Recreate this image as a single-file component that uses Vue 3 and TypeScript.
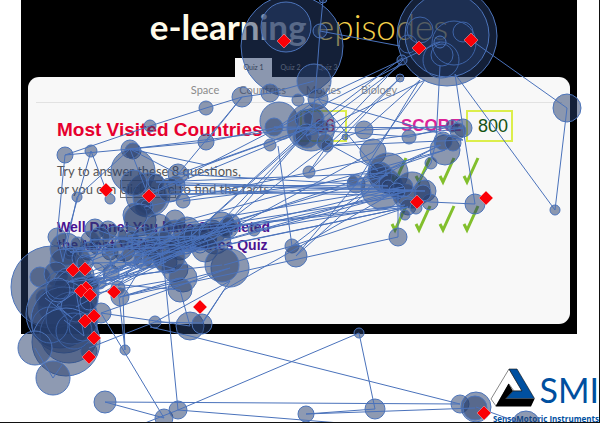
<script setup lang="ts">
type Dot = [number, number, number]
type Point = [number, number]

const tabs: string[] = ['Quiz 1', 'Quiz 2', 'Quiz 3']
const topics: string[] = ['Space', 'Countries', 'Movies', 'Biology']

// Fixations: centre x, centre y, radius (longer dwell = larger circle)
const fixations: Dot[] = [
  // title area
  [292, 46, 51], [286, 27, 25], [323, -1, 4], [320, 31, 7],
  [447, 36, 50], [447, 35, 42], [440, 42, 6],
  // menu and timer
  [314, 81, 17], [270, 93, 9], [242, 97, 10], [206, 108, 7], [279, 121, 19], [298, 100, 6],
  [318, 99, 10], [274, 127, 9], [311, 127, 24], [314, 118, 10], [302, 137, 9], [322, 127, 7],
  [304, 119, 9], [345, 137, 3], [364, 130, 9], [307, 136, 12], [325, 142, 8], [327, 146, 6],
  [270, 145, 6], [206, 142, 8], [150, 126, 6], [309, 172, 6],
  // score
  [400, 78, 4], [402, 60, 5], [567, 108, 14], [409, 137, 7], [452, 126, 6], [463, 128, 9],
  [458, 131, 8], [445, 150, 15], [443, 141, 9], [453, 143, 8], [431, 163, 6], [555, 210, 5],
  [475, 204, 10],
  // tick marks
  [373, 152, 13], [356, 184, 9], [353, 181, 5], [388, 173, 20], [382, 188, 21], [380, 174, 12],
  [378, 171, 8], [390, 184, 11], [388, 186, 6], [412, 190, 18], [425, 191, 11], [430, 202, 8],
  [405, 196, 12], [403, 187, 10], [408, 207, 8], [416, 208, 6], [405, 215, 5], [398, 237, 9],
  [397, 191, 8], [423, 193, 8],
  // intro text
  [65, 155, 8], [91, 151, 6], [130, 149, 9], [133, 151, 8], [133, 171, 22], [148, 195, 22],
  [150, 197, 17], [134, 183, 13], [144, 207, 9], [146, 205, 5], [77, 197, 5], [110, 199, 5],
  [183, 201, 7], [178, 174, 10], [176, 185, 9], [156, 182, 8], [135, 215, 12], [170, 190, 12],
  [140, 220, 16], [175, 220, 10],
  // middle band
  [57, 237, 9], [95, 229, 10], [108, 230, 9], [115, 238, 12], [128, 236, 10], [132, 237, 6],
  [145, 240, 13], [158, 228, 14], [162, 247, 15], [166, 262, 11], [175, 236, 16], [180, 248, 12],
  [187, 231, 14], [190, 240, 12], [196, 236, 12], [204, 236, 13], [212, 233, 13], [222, 224, 12],
  [228, 228, 10], [226, 230, 7], [231, 223, 9], [215, 238, 16], [205, 249, 13], [254, 230, 6],
  [292, 246, 7], [296, 256, 11], [230, 268, 19], [222, 265, 17], [110, 252, 8], [110, 251, 5],
  [124, 250, 11], [132, 256, 10], [143, 260, 9], [151, 247, 10], [90, 240, 9], [97, 246, 8],
  [175, 269, 13], [183, 278, 14], [111, 273, 8], [180, 290, 12], [190, 326, 14], [202, 324, 10],
  [155, 322, 6], [120, 297, 9], [118, 288, 7], [101, 313, 10], [169, 257, 16], [139, 245, 7],
  [88, 251, 9], [102, 262, 9], [100, 237, 10], [118, 262, 8], [152, 259, 9],
  // left cluster
  [52, 287, 41], [40, 277, 10], [66, 249, 16], [78, 244, 7], [70, 253, 7], [70, 252, 4],
  [63, 262, 13], [81, 258, 9], [56, 274, 12], [68, 282, 14], [83, 275, 11], [76, 292, 23],
  [80, 296, 18], [45, 298, 9], [56, 307, 4], [57, 305, 19], [60, 314, 34], [64, 320, 33],
  [69, 334, 29], [72, 318, 26], [76, 307, 15], [89, 301, 9], [100, 283, 6], [92, 283, 7],
  [85, 263, 8], [58, 290, 12], [89, 351, 8], [66, 342, 34], [35, 348, 17], [53, 378, 17],
  // lower edge
  [125, 350, 5], [105, 402, 11], [164, 418, 9], [178, 410, 9], [359, 333, 5], [306, 414, 8],
  [375, 409, 10], [460, 404, 9], [476, 407, 15], [475, 408, 12], [526, 425, 14]
]

// Faint outlines buried under other fixations
const outlines: Dot[] = [
  [442, 55, 11], [454, 43, 22], [441, 60, 18], [463, 32, 10], [408, 44, 9], [420, 30, 13],
  [60, 285, 14], [90, 250, 8], [74, 331, 18], [50, 325, 18], [83, 327, 14], [96, 272, 9],
  [200, 245, 8], [160, 236, 9], [186, 246, 8], [122, 243, 7], [310, 122, 13], [316, 133, 10]
]

const saccades: Point[][] = [
  [[323, 0], [320, 31], [315, 98], [311, 127]],
  [[320, 31], [400, 46]],
  [[567, 108], [555, 210], [455, 74]],
  [[471, 40], [567, 108]],
  [[65, 155], [150, 126], [206, 108], [242, 97], [270, 93], [314, 81]],
  [[65, 155], [57, 237], [63, 262], [77, 197], [130, 149], [148, 195]],
  [[106, 190], [91, 151], [63, 250]],
  [[65, 155], [206, 142], [278, 127], [318, 99], [440, 42]],
  [[206, 142], [242, 97], [178, 174], [311, 127], [402, 58]],
  [[148, 195], [402, 64], [306, 136], [425, 80], [373, 152], [215, 238]],
  [[318, 99], [378, 171], [325, 142], [403, 60]],
  [[318, 99], [463, 140], [327, 146], [400, 78], [309, 172], [327, 146], [463, 128]],
  [[440, 66], [436, 141], [431, 163], [412, 190]],
  [[455, 74], [463, 128], [475, 204], [430, 202], [405, 196]],
  [[364, 130], [452, 126], [409, 137], [274, 127], [463, 128]],
  [[345, 137], [364, 130], [420, 80], [356, 184], [441, 145]],
  [[130, 149], [311, 127], [206, 165], [130, 149], [178, 174]],
  [[148, 195], [270, 145], [311, 127], [215, 238]],
  [[144, 207], [440, 145], [388, 173], [156, 182], [412, 190]],
  [[178, 174], [388, 186], [176, 185], [425, 191], [148, 195], [382, 188]],
  [[183, 201], [388, 175], [223, 224], [405, 196], [170, 190]],
  [[278, 146], [292, 246], [388, 173], [296, 256], [356, 184]],
  [[310, 127], [189, 238], [302, 137], [204, 240], [327, 146]],
  [[231, 223], [445, 150], [158, 228], [403, 187], [212, 233]],
  [[254, 230], [405, 205], [187, 231], [408, 207], [205, 249]],
  [[224, 265], [292, 246], [408, 207], [169, 257]],
  [[398, 237], [230, 274], [120, 297]],
  [[398, 190], [398, 237]],
  [[202, 324], [224, 290], [398, 190], [190, 250], [412, 190], [162, 247]],
  [[80, 258], [187, 231], [76, 292], [215, 238], [68, 282], [222, 265]],
  [[83, 275], [175, 236], [90, 240], [196, 236], [66, 249], [180, 248]],
  [[110, 251], [204, 236], [115, 238], [205, 249], [132, 256], [226, 230]],
  [[76, 292], [145, 240], [85, 263], [166, 262], [101, 283], [212, 233]],
  [[80, 296], [183, 278], [120, 297], [230, 268], [101, 313]],
  [[100, 283], [180, 290], [190, 326], [101, 313]],
  [[89, 301], [124, 250], [70, 252], [162, 247], [111, 273], [169, 257]],
  [[88, 280], [143, 260], [175, 269], [92, 283], [231, 223], [76, 307]],
  [[95, 229], [139, 245], [158, 228], [128, 236], [222, 224]],
  [[104, 268], [150, 244], [118, 286], [196, 246], [96, 290], [170, 250]],
  [[155, 322], [202, 323], [230, 281], [155, 322], [89, 348]],
  [[125, 350], [118, 288]],
  [[125, 350], [123, 297], [158, 240]],
  [[101, 313], [164, 418], [105, 402], [460, 404], [190, 336], [150, 327]],
  [[162, 247], [178, 410], [359, 333], [375, 409], [306, 414], [475, 408]],
  [[178, 410], [340, 423]],
  [[145, 423], [178, 410]],
  [[35, 348], [53, 378], [62, 365]],
  [[64, 320], [84, 336], [76, 292], [57, 305], [72, 318], [45, 298]],
  [[476, 407], [526, 425]]
]

const marks: Point[] = [
  [284, 41], [419, 48], [471, 40], [106, 190], [149, 196], [417, 202], [486, 198], [73, 270],
  [85, 269], [86, 288], [81, 291], [90, 295], [114, 292], [200, 307], [94, 316], [85, 321],
  [94, 338], [89, 357], [484, 413]
]

const toPoints = (path: Point[]): string => path.map(p => p.join(',')).join(' ')
</script>

<template>
  <main class="page">
    <section class="stage">
      <h1 class="title"><b>e-learning</b> <span>episodes</span></h1>
      <nav class="tabs" aria-label="Quizzes">
        <a v-for="(tab, i) in tabs" :key="tab" href="#" :class="{ active: i === 0 }">{{ tab }}</a>
      </nav>
      <div class="card">
        <nav class="topics" aria-label="Topics">
          <a v-for="topic in topics" :key="topic" href="#">{{ topic }}</a>
        </nav>
        <div class="body">
          <h2 class="heading">Most Visited Countries</h2>
          <output class="box time">36</output>
          <span class="label">SCORE</span>
          <output class="box">800</output>
          <div class="copy">
            <p>Try to answer these 8 questions,<br>or you can <a href="#">click here</a> to find the facts</p>
            <p class="done">Well Done! You have Completed<br>the Most Visited Countries Quiz</p>
          </div>
          <div class="ticks">
            <svg v-for="n in 8" :key="n" viewBox="0 0 18 30"><path d="M2 20 L5 26 L16 2" /></svg>
          </div>
        </div>
      </div>
    </section>

    <footer class="brand">
      <div class="brand-row">
        <svg class="emblem" viewBox="0 0 45 39">
          <path d="M19 1 L1 31 L6 38 L19 16 L24 23 L32 23 Z" fill="#fff" stroke="#555" stroke-width=".7" />
          <path d="M18.500 15.500 L5.500 38.500 H41 L44.500 31 H15.500 L23 23 Z" fill="#000" />
          <path d="M19 1 H27 L44.500 30.500 H16 L23 23 H32 Z" fill="#0050a0" stroke="#111" stroke-width=".6" />
        </svg>
        <span class="brand-name">SMI</span>
      </div>
      <span class="brand-full">SensoMotoric Instruments</span>
    </footer>

    <svg class="gaze" viewBox="0 0 600 423" aria-hidden="true">
      <circle v-for="(c, i) in fixations" :key="'f' + i" class="fixation" :cx="c[0]" :cy="c[1]" :r="c[2]" />
      <circle v-for="(c, i) in outlines" :key="'o' + i" class="outline" :cx="c[0]" :cy="c[1]" :r="c[2]" />
      <polyline v-for="(s, i) in saccades" :key="'s' + i" class="saccade" :points="toPoints(s)" />
      <path v-for="(m, i) in marks" :key="'m' + i" class="mark" :d="`M${m[0]} ${m[1] - 7} l7 7 l-7 7 l-7 -7 Z`" />
    </svg>
  </main>
</template>

<style>
body {
  margin: 0;
  background: #fff;
}
</style>

<style scoped>
.page {
  position: relative;
  box-sizing: border-box;
  min-height: 100vh;
  display: flex;
  flex-direction: column;
  justify-content: space-between;
  overflow: hidden;
  border-right: 1px solid #111;
  border-bottom: 1px solid #111;
  font-family: Lato, "Liberation Sans", sans-serif;
}
a {
  color: inherit;
  text-decoration: none;
}
.stage {
  margin: 0 22px 0 21px;
  padding: 6px 7px 10px;
  background: #000;
}
.title {
  margin: 0;
  padding-bottom: 12px;
  text-align: center;
  font-size: 35px;
  line-height: 40px;
  font-weight: 300;
  color: #f5d04a;
}
.title b {
  font-weight: 700;
  color: #fffbea;
}
.tabs {
  display: flex;
  margin-left: 207px;
  font-size: 7px;
  line-height: 19px;
  color: #8a8a8a;
}
.tabs a {
  width: 37px;
  text-align: center;
}
.tabs .active {
  background: #f8f8f8;
  color: #444;
}
.card {
  background: #f8f8f8;
  border-radius: 11px;
  padding: 0 0 70px;
}
.topics {
  display: flex;
  justify-content: center;
  gap: 20px;
  margin: 0 8px;
  padding-right: 10px;
  font-size: 11px;
  line-height: 25px;
  border-bottom: 1px solid #e2e2e2;
  color: #8b8b8b;
}
.body {
  display: grid;
  grid-template-columns: minmax(0, 243fr) minmax(0, 90fr) minmax(0, 11fr) minmax(0, 65fr) minmax(0, 104fr);
  align-items: center;
  padding: 7px 0 0 29px;
}
.heading {
  margin: 0;
  padding-top: 8px;
  font: 700 19px/24px "Liberation Sans", sans-serif;
  color: #e6002e;
  white-space: nowrap;
}
.box {
  box-sizing: border-box;
  width: 47px;
  border: 2px solid #dcee4c;
  padding-right: 3px;
  text-align: right;
  font: 400 18px/28px "Liberation Sans", sans-serif;
  color: #145214;
}
.time {
  padding-right: 10px;
  color: #cf1a5c;
}
.label {
  grid-column: 4;
  font: 700 17px/30px "Liberation Sans", sans-serif;
  color: #dc2398;
}
.copy {
  grid-column: 1 / 3;
  font-size: 13px;
  line-height: 18px;
  color: #555;
  padding-top: 20px;
}
.copy p {
  margin: 0 0 20px;
  white-space: nowrap;
}
.copy a {
  border: 1px solid #777;
}
.copy .done {
  margin: 0;
  font: 700 14px/18px "Liberation Sans", sans-serif;
  color: #4b1291;
}
.ticks {
  grid-column: 3 / 6;
  display: grid;
  grid-template-columns: repeat(4, 18px);
  gap: 18px 6px;
  align-self: start;
  padding-top: 14px;
}
.ticks svg {
  width: 18px;
  height: 30px;
}
.ticks path {
  fill: none;
  stroke: #82bf2c;
  stroke-width: 3;
}
.brand {
  align-self: flex-end;
  display: flex;
  flex-direction: column;
  align-items: flex-end;
  gap: 4px;
  color: #004f9f;
}
.brand-row {
  display: flex;
  align-items: flex-start;
  gap: 4px;
}
.emblem {
  width: 45px;
  height: 39px;
}
.brand-name {
  font: 400 34px/44px Lato, sans-serif;
}
.brand-full {
  font: 700 8px/6px "Open Sans", sans-serif;
}
.gaze {
  position: absolute;
  top: 0;
  left: 0;
  width: 100vw;
  height: auto;
  pointer-events: none;
}
.fixation {
  fill: rgba(38, 62, 108, 0.52);
  stroke: #4c74bb;
  stroke-width: 1;
}
.outline {
  fill: none;
  stroke: #3e64a8;
  stroke-width: 1;
}
.saccade {
  fill: none;
  stroke: #4a72bb;
  stroke-width: 1;
}
.mark {
  fill: #fb0007;
  stroke: #f5b5b5;
  stroke-width: 0.5;
}
</style>
